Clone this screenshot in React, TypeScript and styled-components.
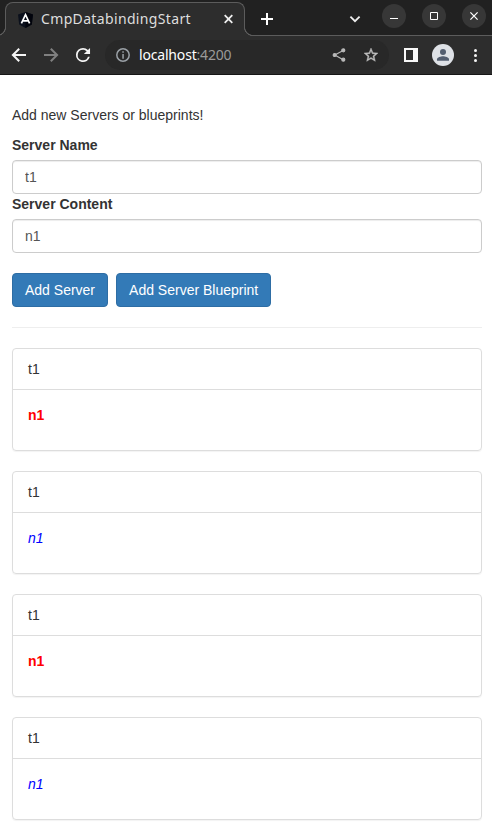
import React from "react";
import styled, { createGlobalStyle, css } from "styled-components";

const STRIP = "#212121";
const BAR = "#2d2d2d";
const LINE = "#5c5c5c";

const GlobalStyle = createGlobalStyle`
  *, *::before, *::after { box-sizing: border-box; }
  html, body { margin: 0; background: #fff; }
  body {
    font: 14px/20px "Liberation Sans", Arial, sans-serif;
    color: #333;
    overflow: hidden;
  }
`;

const Window = styled.div`
  width: 492px;
  height: 828px;
  overflow: hidden;
`;

const TabStrip = styled.div`
  display: flex;
  align-items: flex-start;
  height: 36px;
  padding: 2px 6px 0 5px;
  background: ${STRIP};
  box-shadow: inset 0 -1px ${LINE};
`;

const flare = css`
  content: "";
  position: absolute;
  bottom: 0;
  width: 9px;
  height: 9px;
`;

const Tab = styled.div`
  position: relative;
  display: flex;
  align-items: center;
  width: 240px;
  height: 34px;
  padding: 0 9px 0 12px;
  background: ${BAR};
  border: 1px solid ${LINE};
  border-bottom: 0;
  border-radius: 8px 8px 0 0;
  &::before {
    ${flare}
    left: -9px;
    background: radial-gradient(circle at 0 0, ${STRIP} 7.6px, ${LINE} 8.1px, ${LINE} 8.8px, ${BAR} 9.3px);
  }
  &::after {
    ${flare}
    right: -9px;
    background: radial-gradient(circle at 100% 0, ${STRIP} 7.6px, ${LINE} 8.1px, ${LINE} 8.8px, ${BAR} 9.3px);
  }
`;

const TabTitle = styled.span`
  flex: 1;
  margin: 0 0 2px 8px;
  font: 14px/20px "Noto Sans", sans-serif;
  letter-spacing: 0.35px;
  color: #dedede;
  white-space: nowrap;
`;

const Icon = styled.svg`
  display: block;
  flex: none;
  overflow: visible;
`;

const StripButton = styled.div<{ $gap: number }>`
  display: flex;
  align-items: center;
  justify-content: center;
  width: 24px;
  height: 24px;
  margin: 5px 0 0 ${(p) => p.$gap}px;
`;

const WindowControls = styled.div`
  display: flex;
  gap: 16px;
  margin: 2px 0 0 auto;
`;

const WindowButton = styled.div`
  display: flex;
  align-items: center;
  justify-content: center;
  width: 24px;
  height: 24px;
  border-radius: 50%;
  background: #373737;
`;

const Toolbar = styled.div`
  display: flex;
  align-items: center;
  height: 39px;
  padding: 0 13px 0 11px;
  background: ${BAR};
  border-bottom: 1px solid #161616;
`;

const Navigation = styled.div`
  display: flex;
  gap: 16px;
`;

const AddressBar = styled.div`
  display: flex;
  align-items: center;
  width: 284px;
  height: 30px;
  margin-left: 14px;
  padding: 0 10px 0 11px;
  border-radius: 15px;
  background: #282828;
`;

const Address = styled.span`
  flex: 1;
  margin-left: 9px;
  font: 14px/20px "Noto Sans", sans-serif;
  letter-spacing: -0.18px;
  color: #fff;
`;

const Port = styled.span`
  color: #9a9a9a;
`;

const AddressActions = styled.div`
  display: flex;
  gap: 16px;
`;

const ToolbarActions = styled.div`
  display: flex;
  flex: 1;
  align-items: center;
  padding-left: 15px;
`;

const Avatar = styled.div`
  width: 22px;
  height: 22px;
  margin: 0 19px 0 14px;
  border-radius: 50%;
  overflow: hidden;
  background: #dee1e6;
`;

const Page = styled.main`
  padding: 30px 10px 0 12px;
`;

const Intro = styled.p`
  margin: 0 0 10px;
`;

const Label = styled.label`
  display: block;
  margin-bottom: 5px;
  font-weight: 700;
`;

const Input = styled.input`
  display: block;
  width: 100%;
  height: 34px;
  padding: 6px 12px;
  font: inherit;
  color: #555;
  background: #fff;
  border: 1px solid #ccc;
  border-radius: 4px;
  box-shadow: inset 0 1px 1px rgba(0, 0, 0, 0.075);
  outline: 0;
`;

const Buttons = styled.div`
  display: flex;
  gap: 8px;
  margin-top: 20px;
`;

const Button = styled.button`
  height: 34px;
  padding: 6px 12px;
  font: inherit;
  color: #fff;
  background: #337ab7;
  border: 1px solid #2e6da4;
  border-radius: 4px;
  white-space: nowrap;
`;

const Divider = styled.hr`
  height: 1px;
  margin: 20px 0;
  border: 0;
  background: #eee;
`;

const Panel = styled.section`
  margin-bottom: 20px;
  border: 1px solid #ddd;
  border-radius: 4px;
  box-shadow: 0 1px 1px rgba(0, 0, 0, 0.05);
`;

const PanelHeading = styled.div`
  padding: 10px 15px;
  border-bottom: 1px solid #ddd;
`;

const PanelBody = styled.div`
  padding: 15px 15px 25px;
`;

const ServerContent = styled.strong`
  color: red;
`;

const BlueprintContent = styled.em`
  color: blue;
`;

const servers = [
  { name: "t1", content: "n1", blueprint: false },
  { name: "t1", content: "n1", blueprint: true },
  { name: "t1", content: "n1", blueprint: false },
  { name: "t1", content: "n1", blueprint: true },
];

function BrowserTabs() {
  return (
    <TabStrip>
      <Tab>
        <Icon width="15" height="16" viewBox="0 0 15 16">
          <path d="M7.5 0L15 2.6 13.8 12.5 7.5 16 1.2 12.5 0 2.6Z" fill="#0b101c" />
          <path d="M7.5 0L15 2.6 13.8 12.5 7.5 16Z" fill="#02040c" />
          <path d="M3.4 11.4L7.5 2.7 11.6 11.4M5 8.9H10" fill="none" stroke="#fff" strokeWidth="1.7" />
        </Icon>
        <TabTitle>CmpDatabindingStart</TabTitle>
        <Icon width="13" height="13" viewBox="0 0 13 13" stroke="#efefef" strokeWidth="1.8">
          <path d="M2.7 2.2L10.3 9.8M10.3 2.2L2.7 9.8" />
        </Icon>
      </Tab>
      <StripButton $gap={10}>
        <Icon width="12" height="12" viewBox="0 0 12 12" fill="#fff">
          <path d="M5 0H7V5H12V7H7V12H5V7H0V5H5Z" />
        </Icon>
      </StripButton>
      <StripButton $gap={64}>
        <Icon width="10" height="10" viewBox="0 0 10 10" fill="none" stroke="#eee" strokeWidth="1.8">
          <path d="M0.4 2.6L5 7.2 9.6 2.6" />
        </Icon>
      </StripButton>
      <WindowControls>
        <WindowButton>
          <Icon width="8" height="8" viewBox="0 0 8 8" fill="#fff"><path d="M0 6H8V7H0Z" /></Icon>
        </WindowButton>
        <WindowButton>
          <Icon width="8" height="8" viewBox="0 0 8 8" fill="none" stroke="#fff"><path d="M.5 .5H7.5V7.5H.5Z" /></Icon>
        </WindowButton>
        <WindowButton>
          <Icon width="8" height="8" viewBox="0 0 8 8" fill="none" stroke="#fff" strokeWidth="1.25"><path d="M.4 .4L7.6 7.6M7.6 .4L.4 7.6" /></Icon>
        </WindowButton>
      </WindowControls>
    </TabStrip>
  );
}

function BrowserToolbar() {
  return (
    <Toolbar>
      <Navigation>
        <Icon width="16" height="16" viewBox="0 0 16 16" fill="none" stroke="#f5f5f5" strokeWidth="2">
          <path d="M15 8H2.5M8.2 1.7L1.9 8 8.2 14.3" />
        </Icon>
        <Icon width="16" height="16" viewBox="0 0 16 16" fill="none" stroke="#808080" strokeWidth="2">
          <path d="M1 8H13.5M7.8 1.7L14.1 8 7.8 14.3" />
        </Icon>
        <Icon width="16" height="16" viewBox="0 0 24 24" fill="#f5f5f5">
          <path transform="translate(-3.84 -3.84) scale(1.32)" d="M17.65 6.35A7.96 7.96 0 0 0 12 4a8 8 0 1 0 7.73 10h-2.08A6 6 0 1 1 12 6c1.66 0 3.14.69 4.22 1.78L13 11h7V4z" />
        </Icon>
      </Navigation>
      <AddressBar>
        <Icon width="14" height="14" viewBox="0 0 14 14">
          <circle cx="7" cy="7" r="6.2" fill="none" stroke="#9aa0a6" strokeWidth="1.5" />
          <path d="M6.3 3.3H7.8V4.8H6.3ZM6.3 6H7.8V10.7H6.3Z" fill="#9aa0a6" />
        </Icon>
        <Address>localhost<Port>:4200</Port></Address>
        <AddressActions>
          <Icon width="16" height="16" viewBox="0 0 16 16" fill="#b8b8b8" stroke="#b8b8b8" strokeWidth="1.2">
            <path d="M12.2 3.5L3.8 8 12.2 12.7" fill="none" />
            <circle cx="12.3" cy="3.3" r="1.5" /><circle cx="3.7" cy="8" r="1.5" /><circle cx="12.3" cy="12.7" r="1.5" />
          </Icon>
          <Icon width="16" height="16" viewBox="0 0 24 24" fill="#bdbdbd" stroke="#bdbdbd" strokeWidth="0.6">
            <path transform="translate(-0.6 -0.6) scale(1.05)" d="M22 9.24l-7.19-.62L12 2 9.19 8.63 2 9.24l5.46 4.73L5.82 21 12 17.27 18.18 21l-1.63-7.03L22 9.24zM12 15.4l-3.76 2.27 1-4.28-3.32-2.88 4.38-.38L12 6.1l1.71 4.04 4.38.38-3.32 2.88 1 4.28L12 15.4z" />
          </Icon>
        </AddressActions>
      </AddressBar>
      <ToolbarActions>
        <Icon width="14" height="14" viewBox="0 0 14 14" fill="#f8f8f8">
          <path fillRule="evenodd" d="M0 0H14V14H0ZM2 2V12H9V2Z" />
        </Icon>
        <Avatar>
          <Icon width="22" height="22" viewBox="0 0 22 22" fill="#535e70">
            <circle cx="11" cy="8" r="3" />
            <path d="M5 16.8V15.4C5 13.3 9 12.3 11 12.3S17 13.3 17 15.4V16.8Z" />
          </Icon>
        </Avatar>
        <Icon width="4" height="14" viewBox="0 0 4 14" fill="#f5f5f5">
          <circle cx="2.5" cy="2.5" r="1.5" /><circle cx="2.5" cy="7.5" r="1.5" /><circle cx="2.5" cy="12.5" r="1.5" />
        </Icon>
      </ToolbarActions>
    </Toolbar>
  );
}

export default function App() {
  return (
    <Window>
      <GlobalStyle />
      <BrowserTabs />
      <BrowserToolbar />
      <Page>
        <Intro>Add new Servers or blueprints!</Intro>
        <Label htmlFor="name">Server Name</Label>
        <Input id="name" defaultValue="t1" />
        <Label htmlFor="content">Server Content</Label>
        <Input id="content" defaultValue="n1" />
        <Buttons>
          <Button>Add Server</Button>
          <Button>Add Server Blueprint</Button>
        </Buttons>
        <Divider />
        {servers.map((server, i) => (
          <Panel key={i}>
            <PanelHeading>{server.name}</PanelHeading>
            <PanelBody>
              {server.blueprint ? (
                <BlueprintContent>{server.content}</BlueprintContent>
              ) : (
                <ServerContent>{server.content}</ServerContent>
              )}
            </PanelBody>
          </Panel>
        ))}
      </Page>
    </Window>
  );
}
